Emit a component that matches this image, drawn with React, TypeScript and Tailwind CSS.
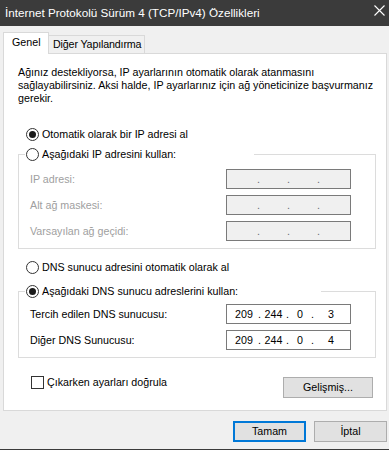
import React from 'react';

function Radio({ checked }: { checked?: boolean }) {
  return (
    <span className="flex h-[13px] w-[13px] shrink-0 items-center justify-center rounded-full border border-[#333333] bg-white">
      {checked && <span className="h-[7px] w-[7px] rounded-full bg-[#1a1a1a]" />}
    </span>
  );
}

function RadioRow({ checked, label }: { checked?: boolean; label: string }) {
  return (
    <div className="flex h-[16px] items-center gap-[3px]">
      <Radio checked={checked} />
      <span className="whitespace-nowrap">{label}</span>
    </div>
  );
}

// widths of octet / dot cells, in px
const evenCells = [27, 3, 27, 3, 27, 3, 29];
const dnsCells = [28, 3, 25, 3, 22, 3, 34];

function IpField({ parts, disabled }: { parts?: string[]; disabled?: boolean }) {
  const cells = parts ? dnsCells : evenCells;
  const octets = parts || ['', '', '', ''];
  return (
    <div
      className={
        disabled
          ? 'flex h-[20px] w-[125px] shrink-0 items-center border border-[#7a7a7a] bg-[#f0f0f0] pl-[3px] text-[#6d6d78]'
          : 'flex h-[20px] w-[125px] shrink-0 items-center border border-[#7a7a7a] bg-white pl-[3px] text-black'
      }
    >
      {cells.map((w, i) => (
        <span key={i} className="overflow-visible whitespace-nowrap text-center" style={{ width: w }}>
          {i % 2 === 0 ? octets[i / 2] : '.'}
        </span>
      ))}
    </div>
  );
}

function FieldRow({ label, children, disabled }: { label: string; children: React.ReactNode; disabled?: boolean }) {
  return (
    <div className="flex h-[20px] items-center justify-between">
      <span className={disabled ? 'whitespace-nowrap text-[#a0a0a0]' : 'whitespace-nowrap'}>{label}</span>
      {children}
    </div>
  );
}

export default function App() {
  return (
    <div className="flex h-[450px] w-[389px] flex-col overflow-hidden border-b border-[#3b3b3b] bg-[#f0f0f0] font-['Liberation_Sans',Arial,sans-serif] text-[10.7px] text-black">
      {/* title bar */}
      <div className="flex h-[26px] shrink-0 items-start justify-between bg-[#3b3b3b] pl-[5px] pr-[4px]">
        <span className="mt-[6px] whitespace-nowrap text-[11.7px] leading-[14px] text-white">
          İnternet Protokolü Sürüm 4 (TCP/IPv4) Özellikleri
        </span>
        <svg className="mt-[5px]" width="11" height="11" viewBox="0 0 11 11">
          <path d="M0.5 0.5 L10.5 10.5 M10.5 0.5 L0.5 10.5" stroke="#ffffff" strokeWidth="1.1" fill="none" />
        </svg>
      </div>

      {/* tabs */}
      <div className="ml-[3px] mt-[6px] flex items-end">
        <div className="relative z-10 -mb-px flex h-[22px] w-[46px] items-center border border-b-0 border-[#d9d9d9] bg-white pb-[3px] pl-[8px]">
          Genel
        </div>
        <div className="flex h-[18px] w-[96px] items-center whitespace-nowrap border-r border-t border-[#d9d9d9] bg-[#f0f0f0] pl-[4px] tracking-[-0.15px]">
          Diğer Yapılandırma
        </div>
      </div>

      {/* tab panel */}
      <div className="ml-[3px] w-[384px] border border-[#d9d9d9] bg-white pb-[12px]">
        <p className="ml-[14px] mt-[12px] whitespace-nowrap leading-[13px]">
          Ağınız destekliyorsa, IP ayarlarının otomatik olarak atanmasını
          <br />
          sağlayabilirsiniz. Aksi halde, IP ayarlarınız için ağ yöneticinize başvurmanız
          <br />
          gerekir.
        </p>

        <div className="ml-[22px] mt-[21px]">
          <RadioRow checked label="Otomatik olarak bir IP adresi al" />
        </div>

        <div className="ml-[14px] mr-[10px] mt-[12px] border border-[#dcdcdc] pb-[7px]">
          <div className="-mt-[9px] ml-[6px] w-[229px] bg-white pl-[1px]">
            <RadioRow label="Aşağıdaki IP adresini kullan:" />
          </div>
          <div className="mt-[7px] flex flex-col gap-[6px] pl-[11px] pr-[24px]">
            <FieldRow label="IP adresi:" disabled>
              <IpField disabled />
            </FieldRow>
            <FieldRow label="Alt ağ maskesi:" disabled>
              <IpField disabled />
            </FieldRow>
            <FieldRow label="Varsayılan ağ geçidi:" disabled>
              <IpField disabled />
            </FieldRow>
          </div>
        </div>

        <div className="ml-[22px] mt-[10px]">
          <RadioRow label="DNS sunucu adresini otomatik olarak al" />
        </div>

        <div className="ml-[14px] mr-[10px] mt-[16px] border border-[#dcdcdc] pb-[7px]">
          <div className="-mt-[9px] ml-[6px] w-[296px] bg-white pl-[1px]">
            <RadioRow checked label="Aşağıdaki DNS sunucu adreslerini kullan:" />
          </div>
          <div className="mt-[5px] flex flex-col gap-[6px] pl-[11px] pr-[24px]">
            <FieldRow label="Tercih edilen DNS sunucusu:">
              <IpField parts={['209', '244', '0', '3']} />
            </FieldRow>
            <FieldRow label="Diğer DNS Sunucusu:">
              <IpField parts={['209', '244', '0', '4']} />
            </FieldRow>
          </div>
        </div>

        <div className="mt-[18px] flex items-start justify-between pl-[27px] pr-[13px]">
          <label className="flex h-[13px] items-center gap-[3px]">
            <span className="h-[13px] w-[13px] shrink-0 border border-[#333333] bg-white" />
            <span className="whitespace-nowrap">Çıkarken ayarları doğrula</span>
          </label>
          <button className="mt-[1px] h-[21px] w-[90px] border border-[#adadad] bg-[#e1e1e1]">Gelişmiş...</button>
        </div>
      </div>

      {/* dialog buttons */}
      <div className="mt-[10px] flex justify-end gap-[8px] pr-[2px]">
        <button className="h-[21px] w-[73px] border-2 border-[#0078d7] bg-[#e1e1e1]">Tamam</button>
        <button className="h-[21px] w-[73px] border border-[#adadad] bg-[#e1e1e1]">İptal</button>
      </div>
    </div>
  );
}
